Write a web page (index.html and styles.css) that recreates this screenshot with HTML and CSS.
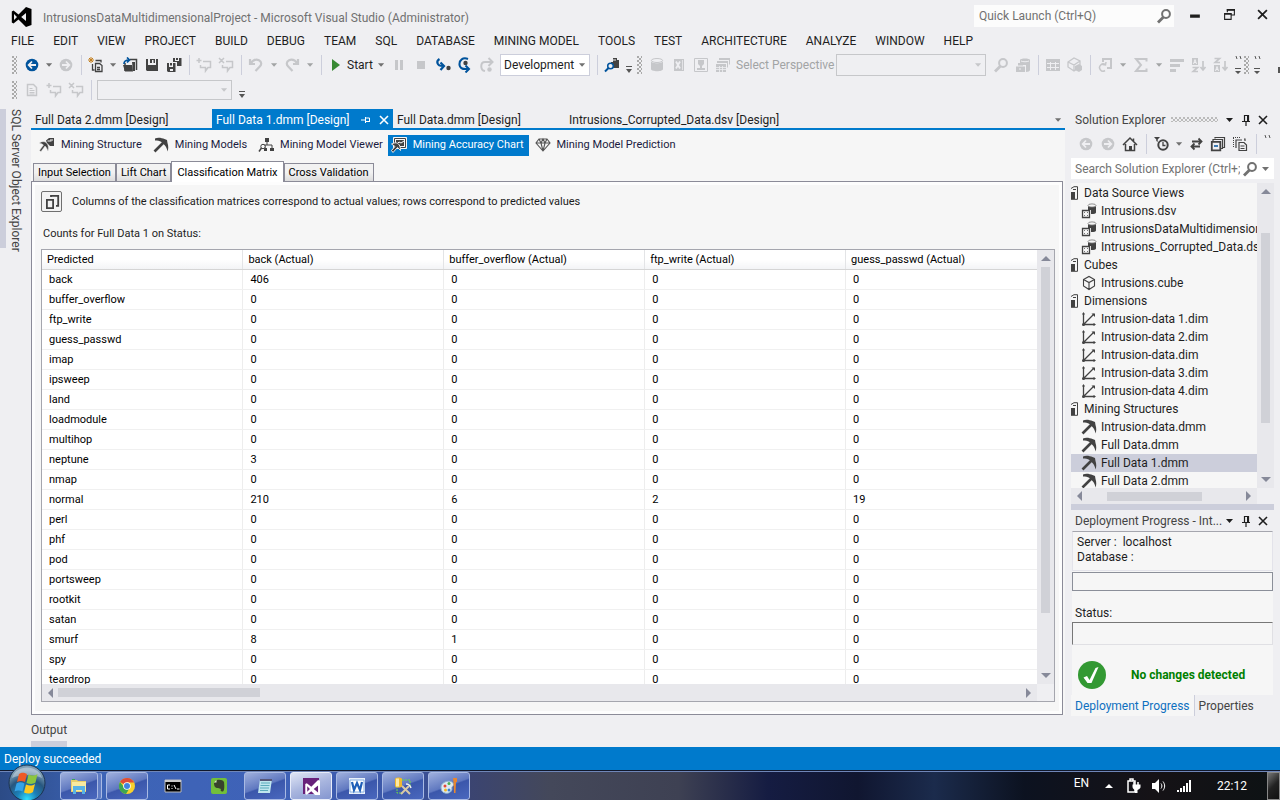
FILE: index.html
```html
<!DOCTYPE html>
<html lang="en">
<head>
<meta charset="utf-8">
<title>IntrusionsDataMultidimensionalProject - Microsoft Visual Studio (Administrator)</title>
<link rel="stylesheet" href="styles.css">
</head>
<body>
<svg class="defs" aria-hidden="true">
  <symbol id="caret" viewBox="0 0 8 4"><path d="M0 0h7L3.500 4z" fill="currentColor"/></symbol>
  <symbol id="more" viewBox="0 0 8 8"><path d="M1 0h6v1H1zM1 3h6L4 7z" fill="currentColor"/></symbol>
  <symbol id="back" viewBox="0 0 16 16"><circle cx="8" cy="8" r="6.300" fill="currentColor"/><path d="M12 8H5M8 4.500 4.700 8 8 11.500" stroke="#efeff2" stroke-width="1.800" fill="none"/></symbol>
  <symbol id="fwd" viewBox="0 0 16 16"><circle cx="8" cy="8" r="6.300" fill="currentColor"/><path d="M4 8h7M8 4.500 11.300 8 8 11.500" stroke="#efeff2" stroke-width="1.800" fill="none"/></symbol>
  <symbol id="new" viewBox="0 0 16 16"><path d="M1 1l4 4M5 1 1 5M3 0v6M0 3h6" stroke="#c27d1a"/><path d="M7.500 3.500H13v2M4.500 7v6h2M7.500 6.500h4l2.500 2v6H7.500zM9 10.500h3M9 12.500h3" fill="none" stroke="#424242" stroke-width="1.300"/></symbol>
  <symbol id="open" viewBox="0 0 16 16"><path d="M8 2.500h6.500V13M3 6v8" stroke="#424242" stroke-width="1.500" fill="none"/><path d="M1 8h9l1 6.500H3zM10 5h3v9h-2z" fill="#424242"/><path d="M2 7c0-3 2-4 5-4M5 .5 7.500 3 5 5.500" fill="none" stroke="#00539c" stroke-width="1.700"/></symbol>
  <symbol id="save" viewBox="0 0 16 16"><path d="M2 2h2v6h8V2h2v12H3l-1-1zM6 2h5v4H9.500V3H8v3H6z" fill="#424242"/></symbol>
  <symbol id="saveall" viewBox="0 0 16 16"><path d="M7 1h2v3h4V1h2.500v8H11V5H7zM10 1h2v2h-2zM1 6h2v4h4V6h2.500v9H2l-1-1zM4 6h2v2.500H4zM4 12v2h3v-2z" fill="#424242" fill-rule="evenodd"/></symbol>
  <symbol id="cadd" viewBox="0 0 16 16"><path d="M3 1v5M.5 3.500h5M7 4.500h7.500v6H12L9.500 14v-3.500H4.500V8" fill="none" stroke="currentColor" stroke-width="1.500"/></symbol>
  <symbol id="cdel" viewBox="0 0 16 16"><path d="M1 1l5 5M6 1 1 6M8 4.500h6.500v6H12L9.500 14v-3.500H4.500V8" fill="none" stroke="currentColor" stroke-width="1.500"/></symbol>
  <symbol id="undo" viewBox="0 0 16 16"><path d="M2 2v5h5M2.500 6.500C5 3 8 2 11 3.200c3 1.500 2.500 4.500 1 6L7.500 14" fill="none" stroke="currentColor" stroke-width="2.200"/></symbol>
  <symbol id="redo" viewBox="0 0 16 16"><path d="M14 2v5H9M13.500 6.500C11 3 8 2 5 3.200c-3 1.500-2.500 4.500-1 6L8.500 14" fill="none" stroke="currentColor" stroke-width="2.200"/></symbol>
  <symbol id="play" viewBox="0 0 16 16"><path d="M4 2v12l8-6z" fill="#388a34"/></symbol>
  <symbol id="pause" viewBox="0 0 16 16"><path d="M4 3h3v10H4zM9 3h3v10H9z" fill="currentColor"/></symbol>
  <symbol id="stop" viewBox="0 0 16 16"><path d="M4 4h8v8H4z" fill="currentColor"/></symbol>
  <symbol id="into" viewBox="0 0 16 16"><path d="M4.500 2C1 4 1.500 9 8 9M5.500 5.500 9 9l-3.500 4" fill="none" stroke="#00539c" stroke-width="2.200"/><circle cx="13.500" cy="11" r="2.200" fill="#424242"/></symbol>
  <symbol id="over" viewBox="0 0 16 16"><path d="M11 2C6 0 2 3 2.500 8c.5 3 3 4.500 8 4M8.500 8.500 12 12l-3.500 3.500" fill="none" stroke="#00539c" stroke-width="2"/><circle cx="8.500" cy="6" r="2.200" fill="#424242"/></symbol>
  <symbol id="out" viewBox="0 0 16 16"><path d="M6 14C1 13 1 5 6 5h7M9.500 1 13.500 5l-4 4" fill="none" stroke="currentColor" stroke-width="2"/><circle cx="10.500" cy="12.500" r="2.200" fill="currentColor"/></symbol>
  <symbol id="find" viewBox="0 0 16 16"><path d="M9 1h4v2h2v8H7V5h2z" fill="#424242"/><path d="M8 3h4" stroke="#efeff2"/><circle cx="6.500" cy="9" r="2.800" fill="#efeff2" stroke="#00539c" stroke-width="1.500"/><path d="M4.500 11 1 14.500" stroke="#00539c" stroke-width="2"/></symbol>
  <symbol id="cyl" viewBox="0 0 16 16"><path d="M2 4v8c0 3 12 3 12 0V4c0 3-12 3-12 0z" fill="currentColor"/><ellipse cx="8" cy="3.500" rx="5.600" ry="2" fill="none" stroke="currentColor"/></symbol>
  <symbol id="xls" viewBox="0 0 16 16"><path d="M3 2h10v12H3z" fill="currentColor"/><path d="M5 4.500l4 7M9 4.500l-4 7" stroke="#efeff2" stroke-width="1.800"/><path d="M11.500 3v10" stroke="#efeff2" stroke-width=".7"/></symbol>
  <symbol id="diag" viewBox="0 0 16 16"><path d="M1.500 1.500h13v13h-13z" fill="none" stroke="currentColor"/><path d="M5 3h6v4L9 9v2h3v2H4v-2h3V9L5 7z" fill="currentColor"/></symbol>
  <symbol id="grids" viewBox="0 0 16 16"><path d="M4.500 1.500h10v6M2.500 4.500h10v6" fill="none" stroke="currentColor"/><path d="M4 1h11v2H4zM2 4h11v2H2zM1 7h10v8H1z" fill="currentColor"/><path d="M1 10.500h10M1 12.500h10M4.500 9v6M7.500 9v6" stroke="#efeff2" stroke-width=".8"/></symbol>
  <symbol id="mag" viewBox="0 0 16 16"><circle cx="10" cy="6" r="3.900" fill="none" stroke="currentColor" stroke-width="2"/><path d="M7.500 9 2 14.500" stroke="currentColor" stroke-width="2.800"/></symbol>
  <symbol id="cylp" viewBox="0 0 16 16"><path d="M5 3c0-2 10-2 10 0v10c0 1-2 2-4 2V8H8L5 6z" fill="currentColor"/><path d="M1 9h9v6H1zM3 6h5v3H3z" fill="currentColor"/><path d="M6 4c2 1 6 1 8 0M1 9h9M5 11v2" stroke="#efeff2" fill="none"/></symbol>
  <symbol id="grid" viewBox="0 0 16 16"><path d="M1 2h14v12H1z" fill="currentColor"/><path d="M2 6.500h12M2 10.500h12M5.500 5v8M10.500 5v8" stroke="#efeff2"/></symbol>
  <symbol id="cubes" viewBox="0 0 16 16"><path d="M1 5l6-4 6 3v6l-6 4-6-4zM1 5l6 3 6-4M7 8v6" fill="none" stroke="currentColor" stroke-width="1.300"/><path d="M8 9l4-2 3 2v4l-3 2-4-2z" fill="currentColor"/></symbol>
  <symbol id="pivot" viewBox="0 0 16 16"><path d="M6 5V2h8v9h-4" fill="none" stroke="currentColor" stroke-width="2"/><path d="M8.500 8A3.500 3.500 0 1 0 8 13.500M5.500 7.500 8.500 8 9 5" fill="none" stroke="currentColor" stroke-width="1.500"/></symbol>
  <symbol id="sigma" viewBox="0 0 16 16"><path d="M13.500 4.500V2H3l5 6-5 6h10.500v-2.500" fill="none" stroke="currentColor" stroke-width="2"/></symbol>
  <symbol id="bars" viewBox="0 0 16 16"><path d="M1 2h14v3H1zM1 7h10v3H1zM1 12h6v3H1z" fill="currentColor"/></symbol>
  <symbol id="az" viewBox="0 0 16 16"><path d="M1 1h6v7H1z" fill="currentColor"/><path d="M2.500 7 4 2.500 5.500 7M3 5.500h2" stroke="#efeff2" fill="none"/><path d="M1.500 10.500h5l-4.500 4h5M12 4v9M9.500 10l2.500 3 2.500-3" fill="none" stroke="currentColor" stroke-width="1.700"/></symbol>
  <symbol id="za" viewBox="0 0 16 16"><path d="M1 8h6v7H1z" fill="currentColor"/><path d="M2.500 14 4 9.500 5.500 14M3 12.500h2" stroke="#efeff2" fill="none"/><path d="M1.500 1.500h5l-4.500 4h5M12 4v9M9.500 10l2.500 3 2.500-3" fill="none" stroke="currentColor" stroke-width="1.700"/></symbol>
  <symbol id="doc" viewBox="0 0 16 16"><path d="M3.500 2.500h6l3 3v8h-9z" fill="none" stroke="currentColor" stroke-width="1.500"/><path d="M5.500 6.500h3M5.500 8.500h5M5.500 10.500h5M5.500 12h5" stroke="currentColor"/></symbol>
  <symbol id="pinh" viewBox="0 0 10 8"><path d="M0 4h4M4.500 1v6M4.500 2h4v3.500h-4" fill="none" stroke="currentColor"/><path d="M4 5h5v1H4z" fill="currentColor"/></symbol>
  <symbol id="pin" viewBox="0 0 8 12"><path d="M2.500 7V1.500h4V7M0 7.500h8M4 8v4" fill="none" stroke="currentColor" stroke-width="1.200"/><path d="M5 1h2v6H5z" fill="currentColor"/></symbol>
  <symbol id="x" viewBox="0 0 10 10"><path d="M1 1l8 8M9 1 1 9" stroke="currentColor" stroke-width="1.600"/></symbol>
  <symbol id="home" viewBox="0 0 16 16"><path d="M1 9l7-7 7 7M3.500 8v6.500h9V8M11.500 5V2.500" fill="none" stroke="#424242" stroke-width="1.500"/><path d="M7 10h3v5H7z" fill="#424242"/></symbol>
  <symbol id="clock" viewBox="0 0 16 16"><path d="M0 1h6L3.700 3.500V6L2.300 5V3.500z" fill="#424242"/><circle cx="9" cy="9" r="4.700" fill="none" stroke="#424242" stroke-width="2"/><path d="M9 6v3.500h2.500" fill="none" stroke="#424242" stroke-width="1.300"/></symbol>
  <symbol id="sync" viewBox="0 0 16 16"><path d="M4 5.500h9M10.500 2.500l3 3-3 3M12 10.500H4M6.500 7.500l-3 3 3 3" fill="none" stroke="#424242" stroke-width="1.800"/></symbol>
  <symbol id="coll" viewBox="0 0 16 16"><path d="M5 2.500V1.500h9.500v10h-1.500M3 5V3.500h9.500v9H11" fill="none" stroke="#424242" stroke-width="1.200"/><path d="M1.800 5.800h8.500v8.500H1.800z" fill="none" stroke="#424242" stroke-width="1.800"/><path d="M4 10h4" stroke="#00539c" stroke-width="1.500"/></symbol>
  <symbol id="files" viewBox="0 0 16 16"><path d="M1 1.500h7M1.500 2v10" stroke="#424242" stroke-dasharray="1 1"/><path d="M4 12V4h6M7 6.500h5l2.500 2.500v5.500H7zM8.500 10h4M8.500 12.500h4M12 3h1v2" fill="none" stroke="#424242" stroke-width="1.200"/></symbol>
  <symbol id="folder" viewBox="0 0 8 14"><path d="M0 2.500 3 .7h3.500v12.600H0" fill="none" stroke="#424242"/><path d="M0 6h4v7H0zM2 3h3v1H2z" fill="#424242"/></symbol>
  <symbol id="dsv" viewBox="0 0 16 16"><path d="M7 3v4h3v4c3 0 5-.5 5-1.500V2z" fill="#424242"/><ellipse cx="11" cy="2.500" rx="4" ry="1.600" fill="#f6f6f6" stroke="#777" stroke-width=".8"/><path d="M1.500 7.500h7v7h-7z" fill="#f6f6f6" stroke="#424242" stroke-width="1.300"/><path d="M3 9.500h1M6 9.500h1M3 12.500h1M6 12.500h1" stroke="#777"/></symbol>
  <symbol id="cube" viewBox="0 0 16 16"><path d="M2.500 4.500 8 1.500l5.500 3v6.500L8 14.500 2.500 11zM2.500 4.500 8 7.500l5.500-3M8 7.500v7" fill="none" stroke="#424242" stroke-width="1.100"/></symbol>
  <symbol id="dim" viewBox="0 0 16 16"><path d="M2.500 2v11.500H14M3 13 13 3" fill="none" stroke="#424242" stroke-width="1.300"/><path d="M1 3.500 2.500 1 4 3.500zM12.500 12l2.500 1.500-2.500 1.500zM10.500 2.500H14V6z" fill="#424242"/><circle cx="2.500" cy="13.500" r="1.500" fill="#424242"/></symbol>
  <symbol id="pick" viewBox="0 0 16 16"><path d="M2 1.500C5 0 9 1 11.500 2L14 3l.5 3C15.500 9 15.500 12 14.500 14.500c-.5-3-1.500-5-3-6.500L8.500 5C6.500 3.500 4.500 3.500 2 3.500z" fill="#424242"/><path d="M1.500 14.500 12 4" stroke="#424242" stroke-width="2.600"/></symbol>
  <symbol id="mstruct" viewBox="0 0 16 16"><path d="M7 3.500 10 1h5v8h-4L8 6z" fill="#424242"/><path d="M8.500 4h4M11 3h3" stroke="#f6f6f6"/><path d="M.5 6C3 4 6 4.500 7.500 6S10 10 9 14C8 11.500 7.500 10.500 6 9L2 14.500.5 13.500 4.500 8C3.500 7 2 6.500.5 6z" fill="#424242" stroke="#ddd" stroke-width=".5"/></symbol>
  <symbol id="mview" viewBox="0 0 16 16"><path d="M7 1h4v4H7zM6 11h3v3H6zM12 11h4v3h-4z" fill="#424242"/><path d="M9 5v3M5 8h9v3M7 8v3" fill="none" stroke="#424242"/><circle cx="5" cy="9.500" r="2.200" fill="#f6f6f6" stroke="#424242"/><path d="M3.500 11 1 14.500" stroke="#424242" stroke-width="1.500"/></symbol>
  <symbol id="macc" viewBox="0 0 16 16"><path d="M2.500.5h13v11h-13z" fill="#f6f6f6" stroke="#f6f6f6"/><path d="M3.500 1.500h11v9h-11z" fill="none" stroke="#424242"/><path d="M5 3h8v6H5z" fill="#424242"/><path d="M6 7l2-2 2 1 3-2" stroke="#fff" fill="none"/><path d="M.5 7c4-2 6-1 7 0 1 1 2 3 2 6.500L6.500 10.500 2 15.500l-1.500-2L4 9.500z" fill="#424242" stroke="#e8e8e8" stroke-width="1"/></symbol>
  <symbol id="gem" viewBox="0 0 16 16"><path d="M4 2h8l3 4-7 8-7-8zM1 6h14M4 2l2 4 2 8 2-8 2-4M6 6l2-4 2 4" fill="none" stroke="#555" stroke-width="1.100"/></symbol>
  <symbol id="copy" viewBox="0 0 16 16"><path d="M7 3V1.800h7.200v10H12" fill="none" stroke="#424242" stroke-width="1.800"/><path d="M2.900 5.900h6.200v8.200H2.900z" fill="none" stroke="#424242" stroke-width="1.800"/></symbol>
  <symbol id="vs" viewBox="0 0 20 20"><path fill-rule="evenodd" d="M14.500 0 20 2v16l-5.500 2L7 12.500 2 16.500.3 15.500V4.500L2 3.500l5 4zM14.500 6 9.700 10l4.800 4zM2.500 7v6l3-3z" fill="currentColor"/></symbol>
</svg>

<header class="titlebar">
  <svg class="logo"><use href="#vs"/></svg>
  <h1>IntrusionsDataMultidimensionalProject - Microsoft Visual Studio (Administrator)</h1>
  <div class="quick"><input type="text" aria-label="Quick Launch" placeholder="Quick Launch (Ctrl+Q)"><svg class="i"><use href="#mag"/></svg></div>
  <div class="winbtns">
    <button aria-label="Minimize"><svg viewBox="0 0 12 12"><path d="M1 6h9v3H1z" fill="#1e1e1e"/></svg></button>
    <button aria-label="Restore"><svg viewBox="0 0 12 12"><path d="M4 4V1.500h6.500v5H8M1.500 5.500h6v5h-6z" fill="none" stroke="#1e1e1e"/><path d="M3.500 1h7.500v1.500H3.500zM1 4.500h7V6H1z" fill="#1e1e1e"/></svg></button>
    <button aria-label="Close"><svg viewBox="0 0 10 10"><use href="#x"/></svg></button>
  </div>
</header>

<nav class="menu">
  <button>FILE</button><button>EDIT</button><button>VIEW</button><button>PROJECT</button><button>BUILD</button><button>DEBUG</button><button>TEAM</button><button>SQL</button><button>DATABASE</button><button>MINING MODEL</button><button>TOOLS</button><button>TEST</button><button>ARCHITECTURE</button><button>ANALYZE</button><button>WINDOW</button><button>HELP</button>
</nav>

<div class="toolbar">
  <i class="grip"></i>
  <button class="tb nav" aria-label="Back"><svg class="i"><use href="#back"/></svg></button>
  <button class="dd" aria-label="History"><svg><use href="#caret"/></svg></button>
  <button class="tb off" aria-label="Forward"><svg class="i"><use href="#fwd"/></svg></button>
  <i class="sep"></i>
  <button class="tb" aria-label="New"><svg class="i"><use href="#new"/></svg></button>
  <button class="dd" aria-label="New options"><svg><use href="#caret"/></svg></button>
  <button class="tb" aria-label="Open"><svg class="i"><use href="#open"/></svg></button>
  <button class="tb" aria-label="Save"><svg class="i"><use href="#save"/></svg></button>
  <button class="tb" aria-label="Save all"><svg class="i"><use href="#saveall"/></svg></button>
  <i class="sep"></i>
  <button class="tb off" aria-label="Add comment"><svg class="i"><use href="#cadd"/></svg></button>
  <button class="tb off" aria-label="Remove comment"><svg class="i"><use href="#cdel"/></svg></button>
  <i class="sep"></i>
  <button class="tb off" aria-label="Undo"><svg class="i"><use href="#undo"/></svg></button>
  <button class="dd wide dim" aria-label="Undo list"><svg><use href="#caret"/></svg></button>
  <button class="tb off" aria-label="Redo"><svg class="i"><use href="#redo"/></svg></button>
  <button class="dd wide dim" aria-label="Redo list"><svg><use href="#caret"/></svg></button>
  <i class="sep"></i>
  <button class="start"><svg class="i"><use href="#play"/></svg><span>Start</span></button>
  <button class="dd wide" aria-label="Start options"><svg><use href="#caret"/></svg></button>
  <button class="tb off" aria-label="Pause"><svg class="i"><use href="#pause"/></svg></button>
  <button class="tb off" aria-label="Stop"><svg class="i"><use href="#stop"/></svg></button>
  <button class="tb" aria-label="Step into"><svg class="i"><use href="#into"/></svg></button>
  <button class="tb" aria-label="Step over"><svg class="i"><use href="#over"/></svg></button>
  <button class="tb off" aria-label="Step out"><svg class="i"><use href="#out"/></svg></button>
  <span class="combo config"><select aria-label="Configuration"><option>Development</option></select><svg><use href="#caret"/></svg></span>
  <i class="sep"></i>
  <button class="tb" aria-label="Find in files"><svg class="i"><use href="#find"/></svg></button>
  <button class="more" aria-label="More"><svg><use href="#more"/></svg></button>
  <i class="grip"></i>
  <button class="tb off" aria-label="Data source"><svg class="i"><use href="#cyl"/></svg></button>
  <button class="tb off" aria-label="Export"><svg class="i"><use href="#xls"/></svg></button>
  <button class="tb off" aria-label="Diagram"><svg class="i"><use href="#diag"/></svg></button>
  <button class="tb off" aria-label="Perspectives"><svg class="i"><use href="#grids"/></svg></button>
  <label class="plabel" for="persp">Select Perspective</label>
  <span class="combo blank persp"><select id="persp" disabled></select><svg><use href="#caret"/></svg></span>
  <button class="tb off" aria-label="Search"><svg class="i"><use href="#mag"/></svg></button>
  <button class="tb off" aria-label="Members"><svg class="i"><use href="#cylp"/></svg></button>
  <i class="sep"></i>
  <button class="tb off" aria-label="Grid"><svg class="i"><use href="#grid"/></svg></button>
  <button class="tb off" aria-label="Cube"><svg class="i"><use href="#cubes"/></svg></button>
  <i class="sep"></i>
  <button class="tb off" aria-label="Process"><svg class="i"><use href="#pivot"/></svg></button>
  <button class="dd wide dim" aria-label="Process options"><svg><use href="#caret"/></svg></button>
  <button class="tb off" aria-label="Aggregate"><svg class="i"><use href="#sigma"/></svg></button>
  <button class="dd wide dim" aria-label="Aggregate options"><svg><use href="#caret"/></svg></button>
  <button class="tb off" aria-label="Align"><svg class="i"><use href="#bars"/></svg></button>
  <button class="tb off" aria-label="Sort ascending"><svg class="i"><use href="#az"/></svg></button>
  <button class="tb off" aria-label="Sort descending"><svg class="i"><use href="#za"/></svg></button>
  <button class="more tall" aria-label="More"><svg viewBox="0 0 8 18"><path d="M2 0l1 3M6 0l1 3" stroke="#555"/><path d="M1 12h6v1H1zM1 15h6l-3 3z" fill="#555"/></svg></button>
  <i class="grip"></i>
  <button class="more tall" aria-label="More"><svg viewBox="0 0 8 18"><path d="M2 0l1 3M6 0l1 3" stroke="#555"/><path d="M1 12h6v1H1zM1 15h6l-3 3z" fill="#555"/></svg></button>
  <i class="tail"></i>
</div>
<div class="toolbar second">
  <i class="grip"></i>
  <button class="tb off" aria-label="Document"><svg class="i"><use href="#doc"/></svg></button>
  <button class="tb off" aria-label="Add comment"><svg class="i"><use href="#cadd"/></svg></button>
  <button class="tb off" aria-label="Remove comment"><svg class="i"><use href="#cdel"/></svg></button>
  <i class="sep"></i>
  <span class="combo blank small"><select aria-label="Filter" disabled></select><svg><use href="#caret"/></svg></span>
  <button class="more" aria-label="More"><svg><use href="#more"/></svg></button>
</div>

<main class="work">
  <aside class="rail"><button>SQL Server Object Explorer</button></aside>

  <section class="editor">
    <nav class="doctabs">
      <button class="t1">Full Data 2.dmm [Design]</button>
      <button class="t2 on"><span>Full Data 1.dmm [Design]</span><svg class="ph"><use href="#pinh"/></svg><svg class="cx"><use href="#x"/></svg></button>
      <button class="t3">Full Data.dmm [Design]</button>
      <button class="t4">Intrusions_Corrupted_Data.dsv [Design]</button>
      <button class="dd" aria-label="Documents"><svg><use href="#caret"/></svg></button>
    </nav>
    <nav class="views">
      <button><svg class="i"><use href="#mstruct"/></svg>Mining Structure</button>
      <button><svg class="i"><use href="#pick"/></svg>Mining Models</button>
      <button><svg class="i"><use href="#mview"/></svg>Mining Model Viewer</button>
      <button class="on"><svg class="i"><use href="#macc"/></svg>Mining Accuracy Chart</button>
      <button><svg class="i"><use href="#gem"/></svg>Mining Model Prediction</button>
    </nav>
    <nav class="subtabs">
      <button>Input Selection</button><button>Lift Chart</button><button class="on">Classification Matrix</button><button>Cross Validation</button>
    </nav>
    <div class="panel">
      <div class="note"><button aria-label="Copy"><svg class="i"><use href="#copy"/></svg></button><p>Columns of the classification matrices correspond to actual values; rows correspond to predicted values</p></div>
      <h2>Counts for Full Data 1 on Status:</h2>
      <div class="gridbox">
        <div class="clip">
          <table>
            <thead><tr><th>Predicted</th><th>back (Actual)</th><th>buffer_overflow (Actual)</th><th>ftp_write (Actual)</th><th>guess_passwd (Actual)</th></tr></thead>
            <tbody>
              <tr><td>back</td><td>406</td><td>0</td><td>0</td><td>0</td></tr>
              <tr><td>buffer_overflow</td><td>0</td><td>0</td><td>0</td><td>0</td></tr>
              <tr><td>ftp_write</td><td>0</td><td>0</td><td>0</td><td>0</td></tr>
              <tr><td>guess_passwd</td><td>0</td><td>0</td><td>0</td><td>0</td></tr>
              <tr><td>imap</td><td>0</td><td>0</td><td>0</td><td>0</td></tr>
              <tr><td>ipsweep</td><td>0</td><td>0</td><td>0</td><td>0</td></tr>
              <tr><td>land</td><td>0</td><td>0</td><td>0</td><td>0</td></tr>
              <tr><td>loadmodule</td><td>0</td><td>0</td><td>0</td><td>0</td></tr>
              <tr><td>multihop</td><td>0</td><td>0</td><td>0</td><td>0</td></tr>
              <tr><td>neptune</td><td>3</td><td>0</td><td>0</td><td>0</td></tr>
              <tr><td>nmap</td><td>0</td><td>0</td><td>0</td><td>0</td></tr>
              <tr><td>normal</td><td>210</td><td>6</td><td>2</td><td>19</td></tr>
              <tr><td>perl</td><td>0</td><td>0</td><td>0</td><td>0</td></tr>
              <tr><td>phf</td><td>0</td><td>0</td><td>0</td><td>0</td></tr>
              <tr><td>pod</td><td>0</td><td>0</td><td>0</td><td>0</td></tr>
              <tr><td>portsweep</td><td>0</td><td>0</td><td>0</td><td>0</td></tr>
              <tr><td>rootkit</td><td>0</td><td>0</td><td>0</td><td>0</td></tr>
              <tr><td>satan</td><td>0</td><td>0</td><td>0</td><td>0</td></tr>
              <tr><td>smurf</td><td>8</td><td>1</td><td>0</td><td>0</td></tr>
              <tr><td>spy</td><td>0</td><td>0</td><td>0</td><td>0</td></tr>
              <tr><td>teardrop</td><td>0</td><td>0</td><td>0</td><td>0</td></tr>
            </tbody>
          </table>
        </div>
        <div class="vbar"><i class="up"></i><div class="track"><i class="thumb"></i></div><i class="down"></i></div>
        <div class="hbar"><i class="left"></i><div class="track"><i class="thumb"></i></div><i class="right"></i></div>
      </div>
    </div>
  </section>

  <aside class="side">
    <header class="phead"><h2>Solution Explorer</h2><i class="dots"></i><button aria-label="Window position"><svg class="car"><use href="#caret"/></svg></button><button aria-label="Auto hide"><svg class="pn"><use href="#pin"/></svg></button><button aria-label="Close"><svg class="cx"><use href="#x"/></svg></button></header>
    <div class="setools">
      <button class="tb off" aria-label="Back"><svg class="i"><use href="#back"/></svg></button>
      <button class="tb off" aria-label="Forward"><svg class="i"><use href="#fwd"/></svg></button>
      <button class="tb" aria-label="Home"><svg class="i"><use href="#home"/></svg></button>
      <i class="sep"></i>
      <button class="tb" aria-label="Pending changes"><svg class="i"><use href="#clock"/></svg></button>
      <button class="dd" aria-label="Filter options"><svg><use href="#caret"/></svg></button>
      <button class="tb" aria-label="Sync"><svg class="i"><use href="#sync"/></svg></button>
      <button class="tb" aria-label="Collapse all"><svg class="i"><use href="#coll"/></svg></button>
      <button class="tb" aria-label="Show all files"><svg class="i"><use href="#files"/></svg></button>
      <i class="sep"></i>
      <button class="more tall" aria-label="More"><svg viewBox="0 0 8 18"><path d="M2 0l1 3M6 0l1 3" stroke="#555"/></svg></button>
    </div>
    <div class="search"><input type="text" aria-label="Search Solution Explorer" placeholder="Search Solution Explorer (Ctrl+;"><svg class="i"><use href="#mag"/></svg><svg class="car"><use href="#caret"/></svg></div>
    <div class="treebox">
      <ul class="tree">
        <li class="f"><svg><use href="#folder"/></svg>Data Source Views</li>
        <li><svg><use href="#dsv"/></svg>Intrusions.dsv</li>
        <li><svg><use href="#dsv"/></svg>IntrusionsDataMultidimension</li>
        <li><svg><use href="#dsv"/></svg>Intrusions_Corrupted_Data.ds</li>
        <li class="f"><svg><use href="#folder"/></svg>Cubes</li>
        <li><svg><use href="#cube"/></svg>Intrusions.cube</li>
        <li class="f"><svg><use href="#folder"/></svg>Dimensions</li>
        <li><svg><use href="#dim"/></svg>Intrusion-data 1.dim</li>
        <li><svg><use href="#dim"/></svg>Intrusion-data 2.dim</li>
        <li><svg><use href="#dim"/></svg>Intrusion-data.dim</li>
        <li><svg><use href="#dim"/></svg>Intrusion-data 3.dim</li>
        <li><svg><use href="#dim"/></svg>Intrusion-data 4.dim</li>
        <li class="f"><svg><use href="#folder"/></svg>Mining Structures</li>
        <li><svg><use href="#pick"/></svg>Intrusion-data.dmm</li>
        <li><svg><use href="#pick"/></svg>Full Data.dmm</li>
        <li class="on"><svg><use href="#pick"/></svg>Full Data 1.dmm</li>
        <li><svg><use href="#pick"/></svg>Full Data 2.dmm</li>
      </ul>
      <div class="vbar"><i class="up"></i><div class="track"><i class="thumb"></i></div><i class="down"></i></div>
      <div class="hbar"><i class="left"></i><div class="track"><i class="thumb"></i></div><i class="right"></i></div>
    </div>
    <div class="split"></div>
    <header class="phead"><h2>Deployment Progress - Int...</h2><button aria-label="Window position"><svg class="car"><use href="#caret"/></svg></button><button aria-label="Auto hide"><svg class="pn"><use href="#pin"/></svg></button><button aria-label="Close"><svg class="cx"><use href="#x"/></svg></button></header>
    <div class="deploy">
      <div class="server"><p>Server :&nbsp; localhost</p><p>Database :</p></div>
      <div class="log"></div>
      <p class="slabel">Status:</p>
      <div class="sbox"></div>
      <div class="result"><svg viewBox="0 0 28 28"><circle cx="14" cy="14" r="14" fill="#339933"/><path d="M5.500 16.500 9 15l2.500 4L17.500 7l3-1-7 16h-4z" fill="#fff"/></svg><strong>No changes detected</strong></div>
    </div>
    <nav class="ptabs"><button class="on">Deployment Progress</button><button>Properties</button></nav>
  </aside>
</main>

<div class="outrow"><button>Output</button></div>
<footer class="status">Deploy succeeded</footer>

<div class="taskbar">
  <button class="orb" aria-label="Start menu"><svg viewBox="0 0 38 38"><defs><radialGradient id="og" cx=".5" cy=".95" r=".8"><stop offset="0" stop-color="#2fe0ff"/><stop offset=".35" stop-color="#1c80b8"/><stop offset=".7" stop-color="#28577f"/><stop offset="1" stop-color="#7d9db5"/></radialGradient></defs><circle cx="19" cy="19" r="18" fill="url(#og)" stroke="#1d3450"/><path d="M4 14C8 0 30 0 34 14c-8-4-22-4-30 0z" fill="#fff" opacity=".35"/><path d="M11 10c3-2 5-1.500 8 0l-2 8c-3-1.500-5-1.500-8 0z" fill="#ee5a24"/><path d="M20.500 10.500c3 1.500 6 1.500 9-.5l-2 8.500c-3 2-6 1.500-9 .5z" fill="#8cc63f"/><path d="M8.500 19.500c3-1.700 5-1.500 8 0l-2 8c-3-1.500-5-1.500-8 0z" fill="#35a3e8"/><path d="M18 20.500c3 1.500 6 1.500 9-.5l-2 8c-3 2-6 2-9 .5z" fill="#fdc921"/></svg></button>
  <button class="task stack" aria-label="File Explorer"><svg viewBox="0 0 18 18"><path d="M1 3h6l1 1h8v11H1z" fill="#e8cf6c"/><path d="M2 5h14v9H2z" fill="#f7e9a0"/><path d="M3 9h12v8h-3v-4H6v4H3z" fill="#58b3e6"/><path d="M2 2h3v1H2z" fill="#3aa655"/></svg></button>
  <button class="task" aria-label="Chrome"><svg viewBox="0 0 18 18"><circle cx="9" cy="9" r="8" fill="#f8d12c"/><path d="M9 9 2 5a8 8 0 0 1 14.200.5H9z" fill="#dd4b39"/><path d="M2 5a8 8 0 0 0 6 12l4-6.500L6 10z" fill="#3fa650"/><circle cx="9" cy="9" r="3.800" fill="#fff"/><circle cx="9" cy="9" r="3" fill="#4083e0"/></svg></button>
  <button class="task flat" aria-label="Command Prompt"><svg viewBox="0 0 18 18"><path d="M1 3h16v12H1z" fill="#000" stroke="#bbb"/><path d="M1 3h16v2H1z" fill="#ccc"/><path d="M6 8H3.500v4H6M8 8.500v1M8 11v1M10 8l2 4M13 12h2.500" fill="none" stroke="#fff"/></svg></button>
  <button class="task flat" aria-label="Evernote"><svg viewBox="0 0 18 18"><rect x="1" y="1" width="16" height="16" rx="2" fill="#72bf3b"/><path d="M4 6l3-3c3-.5 6 0 7 2 .5 4 .5 9-1 9.500-2 .5-3-1-2-2.500L8 11c-3 0-4-2-4-5z" fill="#38432c"/><path d="M4 5.500 6.500 3v2.500z" fill="#dff0d0"/></svg></button>
  <button class="task" aria-label="Notepad"><svg viewBox="0 0 18 18"><path d="M4 2h12l-2 14H2z" fill="#bfe6ee"/><path d="M4 2h12v2H4z" fill="#557"/><path d="M5 6h9M4.500 8.500h9M4 11h9M4 13.500h8" stroke="#5cabbc"/></svg></button>
  <button class="task active" aria-label="Visual Studio"><svg viewBox="0 0 18 18"><path d="M1 1h16v16H1z" fill="#68217a"/><svg x="3" y="3" width="12" height="12" color="#fff"><use href="#vs"/></svg></svg></button>
  <button class="task" aria-label="Word"><svg viewBox="0 0 18 18"><path d="M1 1h16v16H1z" fill="#e9f1fb"/><path d="M2 3h14v12H2z" fill="#fff" stroke="#84aee0"/><path d="M4 5l2 8 3-7 3 7 2-8" fill="none" stroke="#1f5fb8" stroke-width="2.200"/></svg></button>
  <button class="task" aria-label="SQL Tools"><svg viewBox="0 0 18 18"><path d="M5 3h11v6M3 9v7h6" fill="none" stroke="#6ee03a" stroke-dasharray="2 1"/><path d="M1 2c0-2 7-2 7 0v7c0 2-7 2-7 0z" fill="#f0b92e"/><path d="M2 1.500h3v8H2z" fill="#fde9a4"/><path d="M7 17l8-8M8 9l8 8" stroke="#d8c9a5" stroke-width="2"/><path d="M12 7c2 0 4 1 5 4" stroke="#eee" fill="none" stroke-width="1.500"/></svg></button>
  <button class="task" aria-label="Paint"><svg viewBox="0 0 18 18"><path d="M1 10c0-5 9-8 12-4 2 3-2 3-1 6 0 3-4 5-7 4-3-.5-4-3-4-6z" fill="#dfeaf2" stroke="#8fb4d0"/><circle cx="5" cy="9" r="1.500" fill="#e5473a"/><circle cx="9" cy="6.500" r="1.500" fill="#4caf50"/><circle cx="5.500" cy="13" r="1.500" fill="#f2b824"/><circle cx="9" cy="13" r="1.500" fill="#3b7fd0"/><path d="M13 1h4v4h-1l-.5 11h-1.500L13.500 5z" fill="#e8872f"/></svg></button>
  <span class="lang">EN</span>
  <div class="tray">
    <svg viewBox="0 0 8 6"><path d="M0 5h8L4 1z" fill="#fff"/></svg>
    <svg class="t16" viewBox="0 0 16 16"><path d="M2 3h7v11H2zM4 1h3v2H4z" fill="none" stroke="#fff" stroke-width="1.500"/><path d="M8 4v3M12 4v3" stroke="#fff" stroke-width="1.500"/><path d="M6.500 6.500h8V9c0 2-3 3-3 3v3H9v-3s-2.500-1-2.500-3z" fill="#fff"/></svg>
    <svg class="t16" viewBox="0 0 16 16"><path d="M1 5h3l4-4v14l-4-4H1z" fill="#fff"/><path d="M10 5.500c1.200 1.500 1.200 3.500 0 5M12 3.500c2.200 3 2.200 6 0 9" fill="none" stroke="#fff"/></svg>
    <svg class="t16" viewBox="0 0 16 16"><path d="M1 12h2v2H1zM4 10h2v4H4zM7 8h2v6H7zM10 5h2v9h-2zM13 2h2v12h-2z" fill="#fff"/></svg>
  </div>
  <time>22:12</time>
  <button class="peek" aria-label="Show desktop"></button>
</div>
</body>
</html>
```
FILE: styles.css
```css
* { box-sizing: border-box; }
body { margin: 0; height: 100vh; display: flex; flex-direction: column; overflow: hidden; background: #efeff2; color: #1e1e1e; font: 12px/16px Roboto, "Noto Sans", sans-serif; }
h1, h2, p, ul { margin: 0; padding: 0; font-size: inherit; font-weight: normal; }
button, input, select { font: inherit; color: inherit; background: none; border: 0; padding: 0; margin: 0; outline: 0; }
svg { display: block; flex: none; }
.defs { position: absolute; width: 0; height: 0; }
.i { width: 16px; height: 16px; }

.titlebar { display: flex; align-items: center; height: 31px; padding: 0 11px 0 11px; flex: none; }
.logo { width: 21px; height: 20px; margin: 3px 11px 0 0; color: #000; }
.titlebar h1 { flex: 1; color: #717171; padding-top: 4px; white-space: nowrap; }
.quick { display: flex; align-items: center; width: 200px; height: 22px; background: #fcfcfc; padding: 0 2px 0 5px; color: #717171; }
.quick input { flex: 1; min-width: 0; }
.quick .i { color: #717171; }
input::placeholder { color: #717171; opacity: 1; }
.winbtns { display: flex; align-items: center; gap: 21px; margin: 0 1px 2px 15px; }
.winbtns svg { width: 13px; height: 13px; }
.winbtns button:last-child svg { width: 11px; height: 11px; }

.menu { display: flex; height: 20px; padding-left: 11px; gap: 19px; flex: none; align-items: center; }

.toolbar { display: flex; align-items: center; height: 26px; margin-top: 1px; padding-left: 12px; flex: none; overflow: hidden; }
.toolbar.second { height: 24px; margin-top: 0; }
.grip { width: 5px; height: 18px; margin-right: 4px; flex: none; background: radial-gradient(circle at 1px 1px, #aaa 1px, transparent 1px) 0 0 / 4px 4px, radial-gradient(circle at 1px 1px, #aaa 1px, transparent 1px) 2px 2px / 4px 4px; }
.tail { width: 2px; height: 6px; margin: 9px 0 0 auto; background: #555; }
.tb { width: 22px; display: flex; justify-content: center; flex: none; color: #424242; }
.off { color: #c6c7ca; }
.nav { color: #00539c; }
.dd { width: 12px; display: flex; justify-content: center; flex: none; color: #717171; }
.dd.wide { width: 14px; }
.dd.dim { color: #a2a4a5; }
.dd svg, .combo svg { width: 7px; height: 4px; }
.car { width: 8px; height: 4px; }
.sep { width: 8px; height: 20px; flex: none; background: linear-gradient(#cccedb, #cccedb) center / 1px 100% no-repeat; }
.more { width: 12px; display: flex; justify-content: center; flex: none; color: #555; padding-top: 9px; }
.more svg { width: 8px; height: 8px; }
.more.tall { padding-top: 0; }
.more.tall svg { height: 18px; }
.start { display: flex; align-items: center; gap: 3px; padding-left: 3px; width: 49px; flex: none; }
.combo { display: flex; align-items: center; height: 22px; background: #fff; border: 1px solid #cccedb; padding-right: 3px; flex: none; color: #717171; }
.combo select { appearance: none; flex: 1; min-width: 0; color: #1e1e1e; opacity: 1; padding-left: 3px; }
.combo.blank { background: none; border-color: #c6c7ca; color: #c6c7ca; }
.config { width: 90px; margin: 0 3px 0 2px; }
.toolbar .more + .grip { margin-left: 2px; margin-right: 4px; }
.toolbar .tall + .grip { margin-left: 0; margin-right: 2px; }
.plabel { color: #a2a4a5; width: 102px; padding-left: 2px; white-space: nowrap; flex: none; }
.persp { width: 150px; margin-right: 4px; }
.small { width: 135px; height: 20px; margin: 0 4px 0 2px; }

.work { flex: 1; min-height: 0; display: flex; padding: 7px 6px 0 0; }
.rail { width: 31px; flex: none; }
.rail button { writing-mode: vertical-rl; border-left: 6px solid #cccedb; padding-left: 3px; height: 139px; color: #444; white-space: nowrap; line-height: 14px; text-align: left; }
.editor { flex: 1; min-width: 0; display: flex; flex-direction: column; background: #f6f6f6; font-size: 11px; }
.doctabs { display: flex; height: 21px; background: #efeff2; border-bottom: 2px solid #007acc; flex: none; font-size: 12px; }
.doctabs button { padding: 2px 4px 0; text-align: left; white-space: nowrap; }
.doctabs .t1 { width: 181px; }
.doctabs .t2 { width: 181px; display: flex; align-items: center; }
.doctabs .t3 { width: 172px; }
.doctabs .on { background: #007acc; color: #fff; }
.doctabs .on span { flex: 1; }
.ph { width: 10px; height: 8px; margin-right: 8px; }
.cx { width: 10px; height: 10px; }
.doctabs .dd { margin-left: auto; padding: 9px 0 0; width: 14px; }
.views { display: flex; padding: 5px 8px 0; flex: none; height: 30px; align-items: flex-start; }
.views button { display: flex; align-items: center; gap: 6px; height: 21px; padding: 0 5px 2px 0; color: #1b1b40; white-space: nowrap; }
.views button + button { padding-left: 6px; }
.views button + .on { padding-left: 3px; background: #007acc; color: #fff; }
.subtabs { display: flex; align-items: flex-end; height: 21px; padding-left: 2px; flex: none; }
.subtabs button { height: 18px; padding: 0 4px; border: 1px solid #8b8b98; border-bottom: 0; background: linear-gradient(#f2f2f2 50%, #dcdcdc); line-height: 17px; color: #000; white-space: nowrap; }
.subtabs .on { height: 21px; margin-bottom: -1px; background: #fff; padding: 0 5px; z-index: 1; }
.panel { flex: 1; min-height: 0; display: flex; flex-direction: column; border: 1px solid #8b8b98; box-shadow: inset 0 0 0 3px #fdfdfd; margin-right: 2px; padding: 9px 7px 12px 9px; }
.note { display: flex; align-items: center; gap: 10px; color: #1b1b1b; }
.note button { width: 21px; height: 21px; border: 1px solid #707070; border-radius: 2px; display: grid; place-items: center; background: #f3f3f3; }
.panel h2 { padding: 14px 0 7px 2px; }
.gridbox { flex: 1; min-height: 0; display: grid; grid-template: minmax(0, 1fr) 17px / minmax(0, 1fr) 17px; border: 1px solid #a5a6ae; background: #efeff2; }
.clip { overflow: hidden; background: #fff; }
table { border-collapse: collapse; table-layout: fixed; width: 1005px; color: #000; }
th { font-weight: normal; text-align: left; height: 19px; padding: 2px 5px 0; background: linear-gradient(#fff 50%, #f3f4f6); border-right: 1px solid #e3e4e6; border-bottom: 1px solid #d5d5d5; line-height: 16px; }
td { height: 20px; padding: 1px 7px 0; border-right: 1px solid #ededed; border-bottom: 1px solid #f0f0f0; line-height: 16px; }

.vbar, .hbar { background: #e8e8ec; display: flex; align-items: center; }
.vbar { flex-direction: column; padding: 6px 0; }
.hbar { padding: 0 6px; }
.track { flex: 1; display: flex; min-height: 0; }
.vbar .track { margin: 6px 0 4px; }
.hbar .track { margin: 0 5px; height: 9px; }
.thumb { background: #d0d1d7; }
.vbar .thumb { width: 9px; height: 80%; }
.up, .down, .left, .right { border: 5px solid transparent; width: 0; height: 0; }
.up { border-top: 0; border-bottom-color: #868999; }
.down { border-bottom: 0; border-top-color: #868999; }
.left { border-left: 0; border-right-color: #868999; }
.right { border-right: 0; border-left-color: #868999; }
.gridbox .vbar .thumb { height: 86%; }
.gridbox .hbar .thumb { width: 21%; }

.side { width: 203px; margin: 0 0 -1px 6px; flex: none; display: flex; flex-direction: column; }
.phead { display: flex; align-items: center; height: 21px; padding: 0 6px 0 4px; gap: 8px; color: #444; flex: none; }
.phead h2 { white-space: nowrap; margin-right: auto; min-width: 0; }
.phead button { color: #1e1e1e; flex: none; }
.dots { width: 48px; height: 5px; background: radial-gradient(circle at 1px 1px, #bbb 1px, transparent 1px) 0 0 / 4px 4px, radial-gradient(circle at 1px 1px, #bbb 1px, transparent 1px) 2px 2px / 4px 4px; }
.pn { width: 8px; height: 12px; }
.setools { display: flex; align-items: center; height: 27px; padding-left: 4px; flex: none; overflow: hidden; }
.setools .sep { width: 10px; }
.search { display: flex; align-items: center; height: 21px; background: #fff; padding: 0 4px; flex: none; margin-top: 1px; }
.search input { flex: 1; min-width: 0; text-overflow: clip; }
.search .i { color: #717171; margin: 0 4px 0 2px; }
.search .car { color: #717171; }
.treebox { flex: 1; min-height: 0; margin-top: 4px; display: grid; grid-template: minmax(0, 1fr) 16px / minmax(0, 1fr) 17px; background: #efeff2; }
.tree { list-style: none; overflow: hidden; background: #f6f6f6; padding-top: 1px; }
.tree li { display: flex; align-items: center; height: 18px; gap: 4px; padding-left: 10px; white-space: nowrap; }
.tree li svg { width: 16px; height: 16px; }
.tree li.f { padding-left: 0; gap: 5px; }
.tree li.f svg { width: 8px; height: 14px; }
.tree .on { background: #cccedb; }
.treebox .vbar .track { align-items: flex-end; margin-bottom: 54px; }
.treebox .vbar .thumb { height: 85%; }
.treebox .hbar .thumb { width: 95px; margin-left: 20px; }
.split { height: 6px; background: #cccedb; flex: none; }
.deploy { flex: none; background: #f6f6f6; margin: 0 1px; }
.server { border: 1px solid #e3e3ea; border-top-color: #a5a6ae; padding: 3px 4px 5px; line-height: 15px; }
.log { height: 19px; border: 1px solid #8b8f99; margin: 1px 0 13px; }
.slabel { padding-left: 3px; line-height: 18px; }
.sbox { height: 23px; border: 1px solid #e0e0e4; border-top: 1px solid #777; border-left-color: #777; }
.result { display: flex; align-items: center; padding: 16px 6px 6px; gap: 25px; color: #008000; }
.result svg { width: 28px; height: 28px; }
.ptabs { display: flex; height: 21px; flex: none; color: #444; }
.ptabs button { padding: 0 4px; white-space: nowrap; }
.ptabs .on { background: #f6f6f6; color: #0e70c0; border-right: 1px solid #cccedb; }

.outrow { height: 32px; padding-left: 31px; flex: none; display: flex; align-items: flex-end; }
.outrow button { color: #444; border-bottom: 6px solid #cccedb; height: 28px; padding-bottom: 0; }
.status { height: 23px; flex: none; background: #007acc; color: #fff; padding-left: 4px; line-height: 24px; }

.taskbar { height: 30px; flex: none; display: flex; align-items: center; color: #fff; border-top: 1px solid #10182c; box-shadow: inset 0 1px #6f86b8; background: linear-gradient(90deg, #2c4b86 0, #3d64b6 8%, #3f62b8 22%, #3a54a4 32%, #3a4474 36%, #44485a 43%, #3e4153 53%, #151c42 60%, #101630 67%, #1b2b4c 73%, #0c1220 80%, #151216 90%, #0d1214); }
.orb { width: 38px; height: 30px; margin: 0 14px 0 8px; display: flex; align-items: center; }
.orb svg { width: 38px; height: 38px; margin-top: -6px; position: relative; }
.task { width: 42px; height: 28px; margin-right: 4px; display: grid; place-items: center; border: 1px solid #a9bae4; border-radius: 3px; background: linear-gradient(160deg, #9fb0dd, #5f78c0 48%, #3b57ab 52%, #4a68be); flex: none; }
.task svg { width: 18px; height: 18px; }
.task.flat { background: none; border-color: transparent; }
.task.active { background: linear-gradient(160deg, #dfe5f5, #a8b5de 50%, #8496d0); border-color: #e8edfa; }
.task.stack { box-shadow: 4px 0 0 -1px #5f7cc4, 5px 0 0 -1px #a9bae4; margin-right: 8px; width: 38px; }
.lang { margin-left: auto; margin-right: 16px; padding-bottom: 6px; }
.tray { display: flex; align-items: center; gap: 9px; }
.tray svg { width: 8px; height: 6px; margin-right: 4px; }
.tray .t16 { width: 16px; height: 16px; margin-right: 0; }
.taskbar time { margin: 0 20px 0 25px; }
.peek { width: 13px; height: 28px; border: 1px solid #888; background: linear-gradient(135deg, #777, #222 50%, #111); }
```
